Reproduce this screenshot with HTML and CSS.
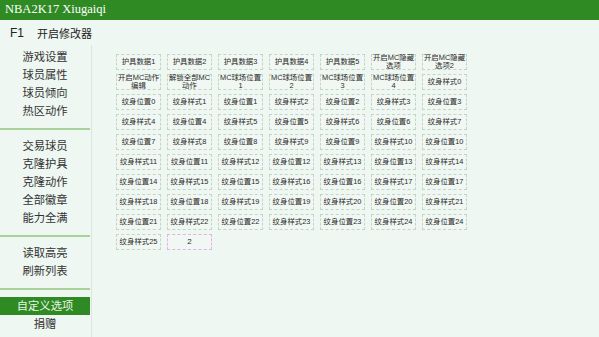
FILE: index.html
```html
<!DOCTYPE html>
<html lang="zh">
<head>
  <meta charset="UTF-8">
  <title>NBA2K17 Xiugaiqi</title>
  <link rel="stylesheet" href="styles.css">
</head>
<body>
  <div class="titlebar">NBA2K17 Xiugaiqi</div>

  <div class="toolbar">
    <span class="key">F1</span>
    <span>开启修改器</span>
  </div>

  <div class="main">
    <div class="sidebar">
      <div class="item">游戏设置</div>
      <div class="item">球员属性</div>
      <div class="item">球员倾向</div>
      <div class="item">热区动作</div>
      <div class="sep"></div>
      <div class="item">交易球员</div>
      <div class="item">克隆护具</div>
      <div class="item">克隆动作</div>
      <div class="item">全部徽章</div>
      <div class="item">能力全满</div>
      <div class="sep"></div>
      <div class="item">读取高亮</div>
      <div class="item">刷新列表</div>
      <div class="sep"></div>
      <div class="item active">自定义选项</div>
      <div class="item">捐赠</div>
    </div>

    <div class="grid" id="grid"></div>
  </div>

  <script>
    const items = [
      "护具数据1", "护具数据2", "护具数据3", "护具数据4", "护具数据5", "开启MC隐藏选项", "开启MC隐藏选项2",
      "开启MC动作编辑", "解锁全部MC动作", "MC球场位置1", "MC球场位置2", "MC球场位置3", "MC球场位置4", "纹身样式0"
    ];
    // 纹身位置/样式 交替排列
    for (let i = 0; i <= 24; i++) {
      items.push("纹身位置" + i);
      items.push("纹身样式" + (i + 1));
    }

    const grid = document.getElementById("grid");
    items.forEach(t => {
      const b = document.createElement("div");
      b.className = "btn";
      b.textContent = t;
      grid.appendChild(b);
    });

    const input = document.createElement("div");
    input.className = "btn input";
    input.textContent = "2";
    grid.appendChild(input);
  </script>
</body>
</html>
```

FILE: styles.css
```css
:root {
  --bg-color: #eef7f1;
  --green: #2f8a24;
  --line-color: #a9d39a;
  --text-color: #333;
  --border-color: #c3d6c6;
}

body {
  margin: 0;
  width: 599px;
  height: 337px;
  overflow: hidden;
  background-color: var(--bg-color);
  color: var(--text-color);
  font-family: "Liberation Sans", "Noto Sans CJK SC", sans-serif;
}

.titlebar {
  height: 20px;
  line-height: 19px;
  background-color: var(--green);
  color: #fff;
  font-family: "Liberation Serif", serif;
  font-size: 12.5px;
  padding-left: 5px;
}

.toolbar {
  height: 25px;
  display: flex;
  align-items: center;
  padding-left: 10px;
  font-size: 11px;
  color: #222;
}

.toolbar .key {
  width: 27px;
  font-size: 12px;
}

.main {
  display: flex;
}

.sidebar {
  width: 92px;
  height: 292px;
  padding-top: 3px;
  border-right: 1px solid #d8e8dc;
  box-sizing: border-box;
}

.item {
  height: 18px;
  line-height: 18px;
  width: 90px;
  text-align: center;
  font-size: 11.3px;
  color: #333;
}

.item.active {
  background-color: var(--green);
  color: #e8f5e4;
}

.sep {
  height: 2px;
  width: 90px;
  margin: 8px 0 7px;
  background-color: var(--line-color);
}

.grid {
  display: grid;
  grid-template-columns: repeat(7, 45px);
  grid-auto-rows: 16px;
  column-gap: 6px;
  row-gap: 4px;
  padding: 9px 0 0 24px;
  align-content: start;
}

.btn {
  border: 1px dashed var(--border-color);
  background-color: #f1f8f3;
  font-size: 7.4px;
  line-height: 8px;
  text-align: center;
  display: flex;
  align-items: center;
  justify-content: center;
  color: #2a2a2a;
  box-sizing: border-box;
  padding: 0;
  word-break: break-all;
}

.btn.input {
  border-color: #e2b3e4;
  font-size: 8px;
}
```
